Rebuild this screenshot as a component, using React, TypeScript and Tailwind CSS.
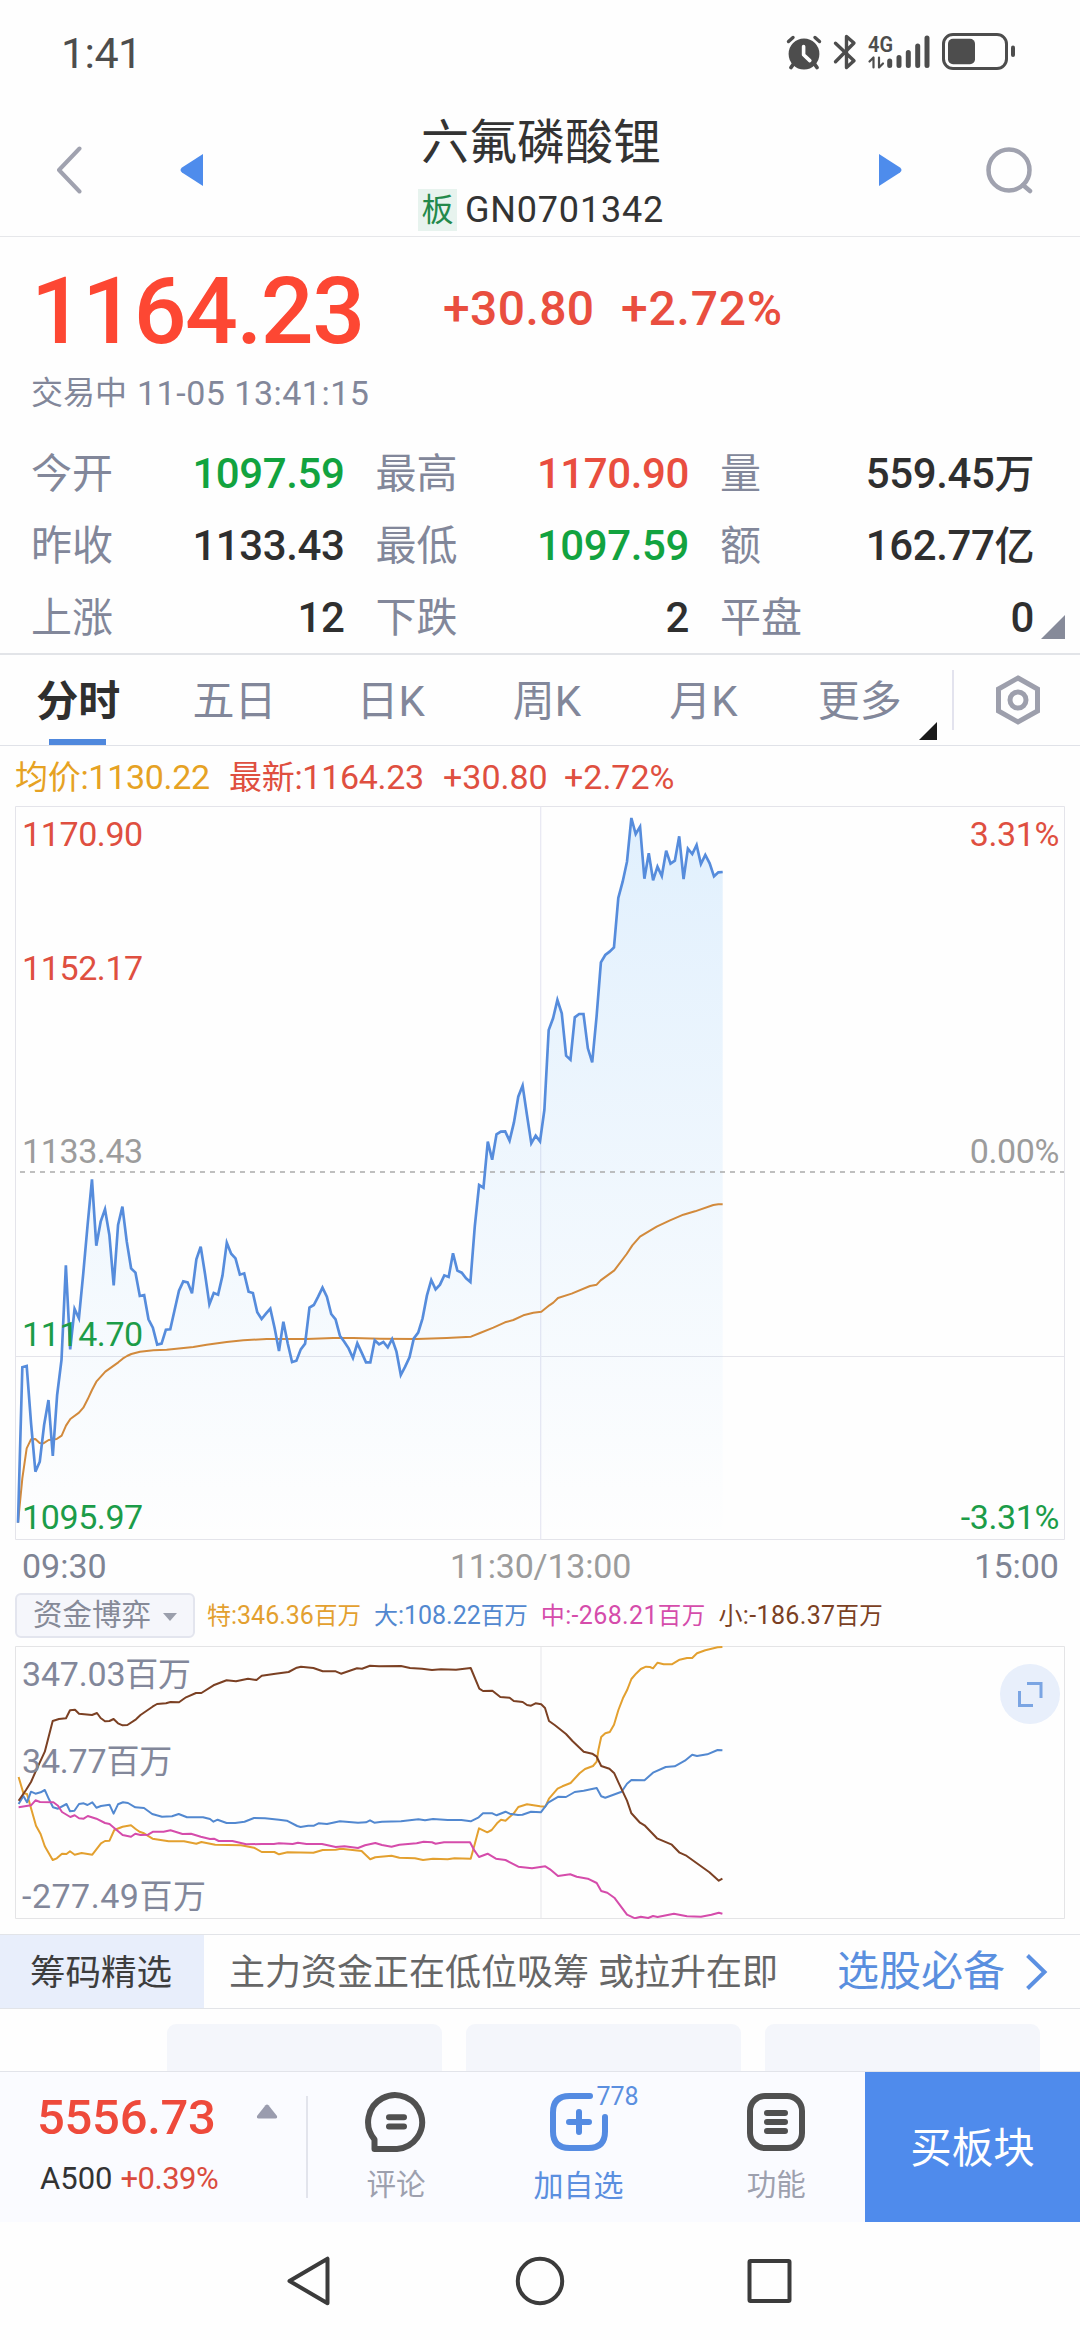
import { clsx } from 'clsx'

const stats = [
  { label: '今开', value: '1097.59', color: 'text-[#12a33f]' },
  { label: '最高', value: '1170.90', color: 'text-[#e94e3f]' },
  { label: '量', value: '559.45', unit: '万', color: 'text-[#2f2f2f]' },
  { label: '昨收', value: '1133.43', color: 'text-[#2f2f2f]' },
  { label: '最低', value: '1097.59', color: 'text-[#12a33f]' },
  { label: '额', value: '162.77', unit: '亿', color: 'text-[#2f2f2f]' },
  { label: '上涨', value: '12', color: 'text-[#2f2f2f]' },
  { label: '下跌', value: '2', color: 'text-[#2f2f2f]' },
  { label: '平盘', value: '0', color: 'text-[#2f2f2f]' },
]

const tabs = ['分时', '五日', '日K', '周K', '月K', '更多']

const priceLabels = [
  { text: '1170.90', pct: '3.31%', pos: 'top-[11px]', color: 'text-[#df4f40]' },
  { text: '1152.17', pos: 'top-[145px]', color: 'text-[#df4f40]' },
  { text: '1133.43', pct: '0.00%', pos: 'top-[328px]', color: 'text-[#9c9c9c]' },
  { text: '1114.70', pos: 'top-[511px]', color: 'text-[#1c9c48]' },
  { text: '1095.97', pct: '-3.31%', pos: 'top-[694px]', color: 'text-[#1c9c48]' },
]

// One value per minute, in thirds of a pixel
const price = [
  1178, 712, 708, 880, 1025, 995, 885, 810, 978, 795, 690, 406, 658, 537, 565, 430, 285, 148, 347, 275,
  238, 315, 466, 285, 230, 335, 415, 428, 498, 495, 568, 593, 644, 641, 599, 598, 540, 482, 454, 457,
  490, 388, 350, 432, 523, 489, 494, 437, 338, 371, 385, 434, 430, 485, 489, 547, 567, 551, 536, 595,
  663, 575, 640, 696, 692, 658, 641, 533, 525, 500, 473, 500, 552, 568, 617, 635, 655, 684, 640, 668,
  697, 697, 631, 643, 636, 652, 627, 665, 735, 710, 682, 625, 608, 565, 497, 450, 478, 464, 436, 441,
  370, 422, 428, 445, 456, 290, 165, 173, 35, 89, 13, 5, 4, 32, -22, -100, -133, -45, 40, 17,
  34, -60, -300, -335, -390, -350, -223, -211, -338, -348, -348, -245, -203, -340, -503, -525, -535, -548, -696, -745,
  -805, -936, -888, -910, -754, -830, -749, -790, -762, -838, -799, -808, -881, -753, -844, -828, -855, -798, -825, -800,
  -761, -773, -774,
]

const pricePoints = price.map((y, i) => `${(54 + i * 13.05).toFixed(1)},${y}`).join(' ')

const averagePoints =
  '54,1178 67,1045 80,955 93,928 106,927 119,939 130,940 146,930 170,927 185,917 198,887 211,867 237,848 250,833 263,808 276,780 289,755 316,725 355,697 368,686 381,678 394,672 420,665 460,661 500,659 580,651 620,644 680,636 730,631 800,627 920,627 1000,624 1060,624 1140,626 1250,627 1340,624 1413,620 1440,609 1480,593 1515,577 1540,570 1570,556 1600,548 1624,545 1648,526 1660,518 1674,504 1715,491 1770,468 1790,464 1802,451 1843,421 1880,372 1897,346 1920,320 1970,290 2010,271 2050,254 2085,244 2140,225 2155,223 2168,223'

const flows = [
  {
    name: '特',
    value: '346.36',
    color: 'text-[#e3a02f]',
    points:
      '18.6,131 23.4,147.3 27,148 36,179.7 40.6,188 44.8,200.3 52.7,214 56.8,212.3 62,207.7 66.5,208 70,205.3 74.7,208.7 81.6,207 92.3,208.7 101,197.3 105,195 109.5,194.7 114.3,184 122.6,180.7 131,179.3 135.3,182.7 139.5,185.7 144,187.3 152.5,192.7 168.7,195.3 184,195.3 196.3,197.7 201.4,196 215.2,198.7 241,199.3 254,201.7 261.7,206 274.4,206 279,208.3 287.5,206.3 313.4,206.7 322.7,204 335.7,203.7 341,202.7 361.6,205 370.2,213.3 375.3,211.3 391.5,209.7 399.4,211.7 415,212.3 423,214 433,212.7 447.7,213.3 454.5,212.3 470.7,212.7 474.5,199 479,182.3 487.3,186.3 491.7,184 497,177.3 501,173.7 505.5,174.7 513.8,167.3 518.3,161 527,158.3 540,160.3 545.3,160.7 549,152.7 557.6,142.7 562.4,140.3 570.6,137 579.6,127.3 585,123 593,120 596.7,115.7 598.4,104 601.2,91 605.3,87.3 609.8,86 614,78.7 618.4,64 622.9,52.3 627,44.3 631.4,33 636,27.7 640.8,23 646,20.7 650,21 653,22.3 657.6,16.7 663.7,18.3 671.8,18.3 679.6,13.7 687,12 692.2,12 697,7.3 705.3,4.3 717.6,1.3 722.4,1',
  },
  {
    name: '大',
    value: '108.22',
    color: 'text-[#5288d0]',
    points:
      '18.6,158 23.4,150 27,156.3 31,145.7 35.5,147.7 40.6,146.3 44.8,144 49,153.3 53,161.3 58,162.7 66.5,158 70,165.3 74.4,164.7 79,158 83.7,157.3 87.5,159 92.3,156.3 96.4,161.7 101,160 109.5,158.7 113.6,167.7 118,158.3 123,156.3 128,157 135.3,161.3 144,162 152.2,168 162,170.7 172,170.3 178.7,168 187,171.3 203,171.3 210,173 213.5,175.7 217.6,173.7 226.6,177 235.2,177 244.5,175.7 254,172 265,172.3 279,173.7 286.8,174.7 297.2,180 300.6,181 308.2,179.7 314,179.7 318.5,177.3 327,178 339.9,175.3 358,176.7 366,176.3 370,174.3 374.3,176.7 382,175.7 401,175.3 418.4,173.3 425,174.3 433,173 447.7,174 461.4,174 470.7,175.3 478.7,171.3 483,167.3 492.4,167.3 496.6,169.3 505.5,165.7 509.6,167.7 518,169 522.4,168.7 531,165.7 540.8,166.3 548.2,156.7 558.4,150.7 566,151 574.7,146 583.7,144.7 596.7,142 601.2,150.3 605.3,151.7 621.6,145.7 627,137.7 631.4,134 644.5,134.3 653,126.7 665.7,121 674.7,120.3 684.9,114.7 692.2,108.7 697,110 707.3,108.3 717.6,104 722.4,104.3',
  },
  {
    name: '中',
    value: '-268.21',
    color: 'text-[#d54cab]',
    points:
      '18.6,161.3 31,159.3 35.5,154.3 40,156 53.4,156.3 58,159.7 62,166 70.3,171 74.7,169.3 79,172.3 83.7,172.7 87.8,170 96.4,172.7 105,177 109.5,178 117.8,185 122.6,189 131,190.7 135.3,187.7 140.5,189 148,188.7 153.2,185.7 163.6,185.7 170.5,184.3 182.5,188 191,187.7 200.8,190.7 210,193 214,192.7 218.7,195 232.4,195 246.2,198.3 261.7,198 273.8,198 279,197.3 292.7,198 297.9,196.7 306.5,198 322,198 335.7,201 344.4,200.3 358,202 365,199.3 375.3,197 382,199 391.5,200.7 399.4,198.7 416.7,197.3 423.6,195.7 432,196.3 435.6,197.7 444,196.3 470,196.3 474.5,204.7 479,211 487.6,207.7 495.9,212.7 505.5,214 518.3,220.7 532,222.3 545.3,220.3 550,223.3 558,230 570.2,228.3 576.7,230.7 587.8,232.7 596.7,237 601.2,245 607.3,246.7 614.3,251.7 627,268.7 635,272.3 640.8,270.7 648.2,272 653,270 657.6,271 673.9,267.7 687,270.3 701,270.7 711.4,268.7 718.8,266.7 722.4,267.7',
  },
  {
    name: '小',
    value: '-186.37',
    color: 'text-[#7b4023]',
    points:
      '18.6,154.7 26,144 31,136 36,124.7 44.8,105.7 52.7,75 59,73 66,72.3 70,64.3 75,63.7 79,67.7 92,69 97,67 100.6,72 105,75.3 109.5,75 113.6,73 118,77.3 122.6,79.3 127.4,79 136,73.3 140.5,69 152.5,60.7 157,58 166,57.3 170.5,56 179,56.3 186,51.3 196,47 201.4,47 213.5,39.3 226.6,34.3 236,35.3 248,32.7 256.5,34 261.7,29.7 275.5,27.7 288.6,26 296.8,21.7 301,20.7 313.4,22 322.7,25.3 335.7,25.3 341,27.7 357,22.3 362,22.7 370,19.7 379,20.3 401,20 410,22 422,22.7 432,24 441,23.3 456,23.7 470.7,22 479.3,42.7 483,45 492.4,44.7 500.3,51 509.6,51.7 513.8,55 522.7,56 527,59 531,59.7 535.5,57.3 541.2,58.3 545,62 549,75 555,79.3 566,88 572.7,95.3 583.7,105.7 592.2,107.7 596.7,110.7 601.2,120 609.4,122.7 614.3,127.3 618.4,136.3 627,154.7 631.4,167.3 640,176.7 644.5,179.3 657,192.3 671.8,198.7 679.6,206.7 685.7,209.3 709.4,226.3 718.8,234.7 722.4,232.7',
  },
]

const StatusBar = () => (
  <div className="flex h-[104px] items-center justify-between pl-[61px] pr-[64px]">
    <span className="mt-[3px] text-[43px] leading-none tracking-[-0.6px] text-[#4d4d4d]">1:41</span>
    <svg width="236" height="40" viewBox="780 32 236 40" fill="none" stroke="#4d4d4d" strokeLinecap="round">
      {/* alarm */}
      <circle cx="804" cy="54" r="15.4" fill="#4d4d4d" stroke="none" />
      <path d="M788.5 41.5l4.5-4M819.5 41.5l-4.5-4" strokeWidth="3.4" />
      <path d="M793.5 64l-2.5 3.5M814.5 64l2.5 3.5" strokeWidth="3.8" />
      <path d="M803.6 46.5v8.3l6.2 5.8" stroke="#fff" strokeWidth="3.6" strokeLinejoin="round" />
      {/* bluetooth */}
      <path d="M835.5 43.2l18.5 17.6-7.5 6.7v-31l7.5 6.5-18.5 18.8" strokeWidth="3.4" strokeLinejoin="round" />
      <text x="868" y="51.5" fill="#4d4d4d" stroke="none" fontSize="22" fontWeight="600" textLength="25" lengthAdjust="spacingAndGlyphs">4G</text>
      <path d="M869.5 61.5l4-4v10M879 57.5v10l4-4" strokeWidth="2.2" strokeLinejoin="round" />
      <path d="M889.7 61v4.5M899 57.5v8M908.3 52.5v13M917.7 46v19.5M927 38v27.5" strokeWidth="5" />
      {/* battery */}
      <rect x="943.5" y="34.5" width="63" height="34" rx="9.5" strokeWidth="3" />
      <rect x="948" y="38.7" width="27" height="25.5" rx="5" fill="#4d4d4d" stroke="none" />
      <path d="M1013 47.5v7.5" strokeWidth="4" />
    </svg>
  </div>
)

const Header = () => (
  <header className="flex h-[133px] justify-between border-b border-[#e6e7ea] pl-[55px] pr-[47px]">
    <div className="flex w-[148px] items-center justify-between">
      <svg width="28" height="48" viewBox="0 0 28 48" fill="none">
        <path d="M24.5 2.5L4 24l20.5 21.5" stroke="#a0a2af" strokeWidth="4" strokeLinecap="round" strokeLinejoin="round" />
      </svg>
      <svg width="24" height="32" viewBox="0 0 24 32" fill="#4e8cec">
        <path d="M24 0v32L3 18.5Q0 16 3 13.5Z" />
      </svg>
    </div>
    <div className="flex flex-col items-center">
      <h1 className="mt-[15px] text-[48px] leading-[48px] text-[#333]">六氟磷酸锂</h1>
      <div className="mt-[22px] flex items-center gap-2">
        <span className="flex h-[42px] w-[39px] items-center justify-center bg-[#e7f3ee] text-[32px] leading-none text-[#23894b]">板</span>
        <span className="text-[36px] leading-none tracking-[0.8px] text-[#333]">GN0701342</span>
      </div>
    </div>
    <div className="flex w-[154px] items-center justify-between">
      <svg width="24" height="32" viewBox="0 0 24 32" fill="#4e8cec">
        <path d="M0 0v32l21-13.5q3-2.5 0-5Z" />
      </svg>
      <svg width="48" height="48" viewBox="0 0 48 48" fill="none" stroke="#a0a2af" strokeWidth="4.5">
        <circle cx="24" cy="24" r="20.5" />
        <path d="M38 39l7 6" strokeLinecap="round" />
      </svg>
    </div>
  </header>
)

const Quote = () => (
  <section className="relative h-[416px] pl-[31px] pr-[46px]">
    <div className="flex h-[132px] items-center pt-[16px] font-medium leading-none">
      <span className="w-[412px] text-[93px] tracking-[-1.5px] text-[#fd4733]">1164.23</span>
      <span className="mb-[5px] w-[178px] text-[48px] tracking-[0.4px] text-[#e94e3f]">+30.80</span>
      <span className="mb-[5px] text-[48px] tracking-[0.8px] text-[#e94e3f]">+2.72%</span>
    </div>
    <div className="flex h-[48px] items-center gap-[10px] text-[34px] leading-none text-[#82879a]">
      <span className="text-[32px]">交易中</span>
      <span className="tracking-[0.5px]">11-05 13:41:15</span>
    </div>
    <div className="mt-[21px] grid grid-cols-[344.5px_344.5px_314px]">
      {stats.map((s) => (
        <div key={s.label} className="flex h-[72px] items-center justify-between pr-[31px] text-[42px] leading-none nth-[3n]:pr-0">
          <span className="text-[41px] text-[#82879a]">{s.label}</span>
          <span className={clsx('font-medium tracking-[-0.4px]', s.color)}>
            {s.value}
            {s.unit && <span className="text-[40px]">{s.unit}</span>}
          </span>
        </div>
      ))}
    </div>
    <svg className="absolute bottom-[14px] right-[15px]" width="24" height="24" viewBox="0 0 24 24" fill="#868a99">
      <path d="M24 0v24H0Z" />
    </svg>
  </section>
)

const PeriodTabs = () => (
  <nav className="flex h-[93px] items-stretch border-b border-t-2 border-b-[#e0e2e8] border-t-[#e2e4e8]">
    {tabs.map((tab, i) => (
      <div key={tab} className="relative flex w-[156.3px] items-center justify-center pt-[3px] text-[42px] leading-none">
        <span className={i === 0 ? 'font-bold text-[#2f2f2f]' : 'text-[#82879a]'}>{tab}</span>
        {i === 0 && <span className="absolute bottom-0 left-[49px] h-[6px] w-[57px] bg-[#4f88dd]" />}
        {i === 5 && (
          <svg className="absolute bottom-[5px] right-px" width="18" height="18" viewBox="0 0 18 18">
            <path d="M18 0v18H0Z" fill="#1a1a1a" />
          </svg>
        )}
      </div>
    ))}
    <div className="ml-[14px] h-[60px] w-[2px] self-center bg-[#e3e3ee]" />
    <svg className="ml-[39px] self-center" width="50" height="52" viewBox="0 0 50 52" fill="none" stroke="#9d9fac" strokeWidth="5">
      <path d="M25 4L44.5 15v22L25 48 5.5 37V15Z" />
      <circle cx="25" cy="26" r="8" />
    </svg>
  </nav>
)

const PriceChart = () => (
  <section>
    <div className="flex h-[60px] items-center pl-[15px] pt-[2px] text-[34px] leading-none text-[#df4f40]">
      <span className="w-[214px] tracking-[-0.3px] text-[#e6a223]">
        <span className="text-[33px]">均价</span>:1130.22
      </span>
      <span className="w-[214px] tracking-[-0.3px]">
        <span className="text-[33px]">最新</span>:1164.23
      </span>
      <span className="w-[121px]">+30.80</span>
      <span>+2.72%</span>
    </div>
    <div className="relative text-[34px] leading-none tracking-[-0.4px]">
      <svg className="block" width="1080" height="734" viewBox="0 -972 3240 2202" fill="none">
        <defs>
          <linearGradient id="area" gradientUnits="userSpaceOnUse" x1="0" y1="-940" x2="0" y2="1228">
            <stop offset="0" stopColor="#3b9ff8" stopOpacity="0.15" />
            <stop offset="1" stopColor="#3b9ff8" stopOpacity="0" />
          </linearGradient>
        </defs>
        <path d="M46.5 -970.5H3193.5V1228.5H46.5ZM46.5 679.5H3193.5" stroke="#e4e4ea" strokeWidth="3" />
        <path d="M1622 -970V1228" stroke="#e9e9f3" strokeWidth="4" />
        <polygon points={`54,1227 ${pricePoints} 2168,1227`} fill="url(#area)" />
        <path d="M60 126H3192" stroke="#ababab" strokeWidth="5" strokeDasharray="15 15" />
        <polyline points={averagePoints} stroke="#d28a3c" strokeWidth="6" strokeLinejoin="round" />
        <polyline points={pricePoints} stroke="#568cdc" strokeWidth="8" />
      </svg>
      {priceLabels.map((l) => (
        <div key={l.text} className={clsx('absolute left-[22px] right-[21px] flex justify-between', l.pos, l.color)}>
          <span>{l.text}</span>
          <span>{l.pct}</span>
        </div>
      ))}
    </div>
    <div className="flex h-[53px] items-center justify-between pb-[2px] pl-[22px] pr-[21px] text-[34px] leading-none text-[#7e8494]">
      <span>09:30</span>
      <span className="tracking-[-0.2px] text-[#9c9c9c]">11:30/13:00</span>
      <span>15:00</span>
    </div>
  </section>
)

const FlowChart = () => (
  <section>
    <div className="flex h-[45px] items-center pl-[15px] leading-none">
      <button className="flex h-[45px] w-[180px] items-center rounded-[6px] border-2 border-[#e3e5ee] bg-[#f5f6fb] pl-[16px] pt-px text-[29.5px] text-[#868a98]">
        资金博弈
        <svg className="ml-[12px] mt-px" width="14" height="8" viewBox="0 0 14 8">
          <path d="M0 0h14L7 8Z" fill="#9b9fac" />
        </svg>
      </button>
      <div className="ml-[12px] flex gap-[13px] pt-px text-[25px]">
        {flows.map((f) => (
          <span key={f.name} className={clsx(f.color, f.value.startsWith('-') && 'tracking-[0.35px]')}>
            <span className="text-[24px]">{f.name}</span>:{f.value}
            <span className="text-[23.5px]">百万</span>
          </span>
        ))}
      </div>
    </div>
    <div className="relative mt-[8px] text-[34px] leading-none text-[#82879a]">
      <svg className="block" width="1080" height="273" viewBox="0 0 1080 273" fill="none">
        <path d="M15.5 .5H1064.5V272.5H15.5Z" stroke="#e4e4e6" />
        <path d="M541 1V272" stroke="#eeeef1" strokeWidth="1.5" />
        {flows.map((f) => (
          <polyline key={f.name} className={f.color} points={f.points} stroke="currentColor" strokeWidth="2" strokeLinejoin="round" />
        ))}
      </svg>
      <span className="absolute left-[22px] top-[11px] tracking-[-0.2px]">347.03<span className="text-[33px]">百万</span></span>
      <span className="absolute left-[22px] top-[98px] tracking-[-0.2px]">34.77<span className="text-[33px]">百万</span></span>
      <span className="absolute left-[22px] top-[233px] tracking-[0.5px]">-277.49<span className="text-[33px]">百万</span></span>
      <div className="absolute right-[20px] top-[18px] flex size-[60px] items-center justify-center rounded-full bg-[#e8effb]">
        <svg width="26" height="26" viewBox="0 0 26 26" fill="none" stroke="#7ba5e3" strokeWidth="3">
          <path d="M10 2.5h14V17M2.5 10v14.5H16" />
        </svg>
      </div>
    </div>
  </section>
)

const Promo = () => (
  <section className="mt-[15px]">
    <div className="flex h-[75px] items-center border-y border-[#e2e4e8] text-[36px] leading-none">
      <span className="flex h-full w-[204px] items-center bg-[#e8eefb] pl-[30px] pt-[4px] text-[35.5px] text-[#3d3d3d]">筹码精选</span>
      <span className="ml-[25px] pt-[3px] text-[#666]">主力资金正在低位吸筹 或拉升在即</span>
      <span className="ml-auto text-[42px] text-[#5a8fdf]">选股必备</span>
      <svg className="ml-[20px] mr-[31px]" width="24" height="36" viewBox="0 0 24 36" fill="none">
        <path d="M2.5 1.5L19.5 18 2.5 34.5" stroke="#5b90e2" strokeWidth="4" />
      </svg>
    </div>
    <div className="flex h-[62px] justify-end gap-[24px] pr-[40px] pt-[15px]">
      <div className="w-[275px] rounded-t-[9px] bg-[#f4f6fb]" />
      <div className="w-[275px] rounded-t-[9px] bg-[#f4f6fb]" />
      <div className="w-[275px] rounded-t-[9px] bg-[#f4f6fb]" />
    </div>
  </section>
)

const ActionBar = () => (
  <footer className="flex h-[151px] border-t border-[#e2e4ea] bg-[#fafbff] leading-none">
    <div className="w-[306px] pl-[37px] pt-[21px]">
      <div className="flex items-center">
        <span className="w-[219px] text-[49px] font-medium tracking-[-0.3px] text-[#ee4a3b]">5556.73</span>
        <svg className="mb-[12px]" width="22" height="15" viewBox="0 0 22 15" fill="#9a9cae">
          <path d="M9.5 1.2Q11 0 12.5 1.2L21 12q.5 2.5-1.5 2.5h-17Q.5 14.5 1 12Z" />
        </svg>
      </div>
      <div className="mt-[21px] flex gap-[8px] pl-[3px] text-[31px]">
        <span className="text-[#333]">A500</span>
        <span className="tracking-[-0.5px] text-[#da4c3e]">+0.39%</span>
      </div>
    </div>
    <div className="mt-[24px] h-[102px] w-[1.5px] bg-[#e2e4ec]" />
    <div className="flex w-[177px] flex-col items-center pt-[19px] text-[29.5px] text-[#9da0ae]">
      <svg width="62" height="62" viewBox="0 0 62 62" fill="none" stroke="#505050" strokeWidth="6">
        <path d="M9.5 48.5A27 27 0 1 1 32 58H9.5Z" strokeLinejoin="round" />
        <path d="M24 26.3h15M24 35.5h15" strokeLinecap="round" />
      </svg>
      <span className="mt-[18px]">评论</span>
    </div>
    <div className="relative flex w-[188px] flex-col items-center pt-[19px] text-[30px] text-[#5b8fdf]">
      <svg width="62" height="62" viewBox="0 0 62 62" fill="none" stroke="#548be2" strokeWidth="6" strokeLinecap="round">
        <path d="M42 5H21.5Q5 5 5 21.5v19Q5 57 21.5 57h19Q57 57 57 40.5V26" />
        <path d="M31 21v20M21 31h20" />
      </svg>
      <span className="mt-[18px]">加自选</span>
      <span className="absolute left-[112px] top-[12px] text-[25px]">778</span>
    </div>
    <div className="flex w-[192.5px] flex-col items-center pl-[15px] pt-[19px] text-[29.5px] text-[#9da0ae]">
      <svg width="62" height="62" viewBox="0 0 62 62" fill="none" stroke="#505050" strokeWidth="6" strokeLinecap="round">
        <rect x="5" y="5" width="52" height="52" rx="15" />
        <path d="M22 22h18M22 31h18M22 40h18" />
      </svg>
      <span className="mt-[18px]">功能</span>
    </div>
    <button className="flex-1 bg-[#4f8bec] pt-[4px] text-[41.5px] text-white">买板块</button>
  </footer>
)

const NavBar = () => (
  <div className="flex h-[118px] items-center justify-center">
    <svg width="508" height="52" viewBox="286 2255 508 52" fill="none" stroke="#3b3b3b" strokeWidth="4" strokeLinejoin="round">
      <path d="M327.5 2258.7v44.5L289.5 2281Z" />
      <circle cx="540" cy="2281" r="22.2" />
      <rect x="749.5" y="2261" width="40" height="40" rx="1" />
    </svg>
  </div>
)

const App = () => (
  <main className="h-[2340px] w-[1080px] overflow-hidden bg-[#fefefe] font-[family-name:Roboto,'Noto_Sans_CJK_SC',sans-serif]">
    <StatusBar />
    <Header />
    <Quote />
    <PeriodTabs />
    <PriceChart />
    <FlowChart />
    <Promo />
    <ActionBar />
    <NavBar />
  </main>
)

export default App
